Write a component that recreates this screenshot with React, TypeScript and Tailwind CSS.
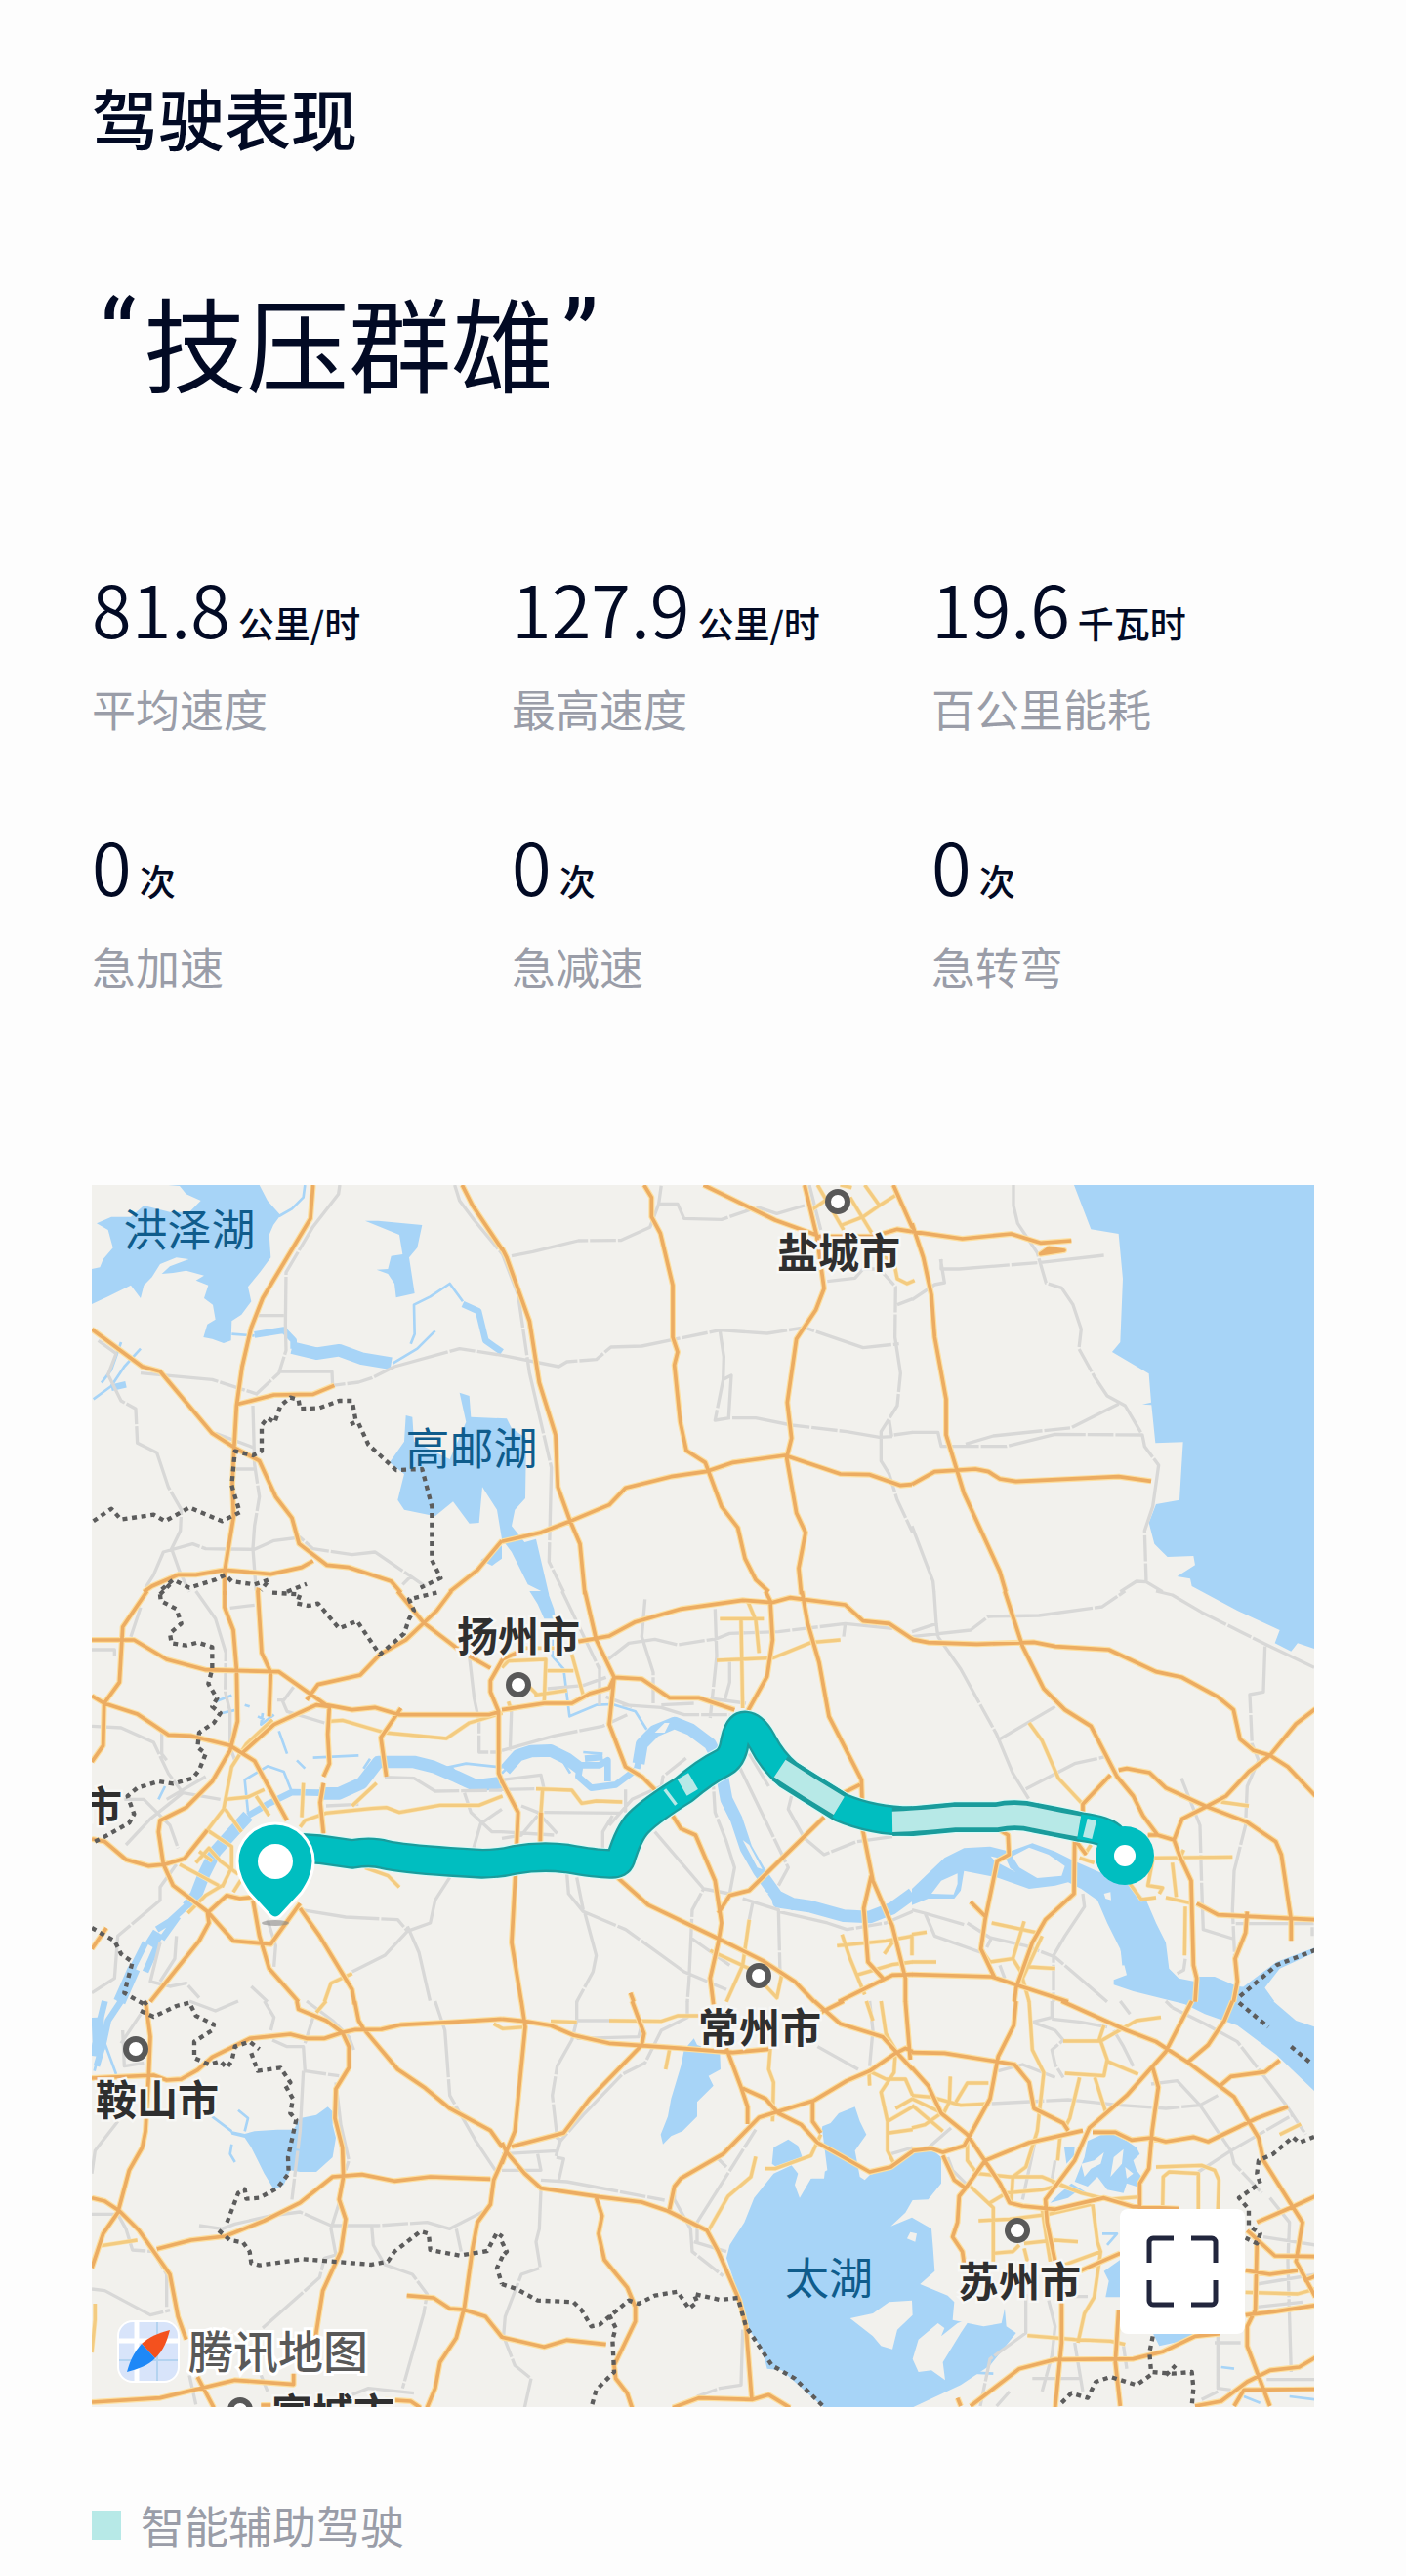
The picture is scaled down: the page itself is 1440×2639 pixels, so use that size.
import React from 'react';

type Stat = { value: string; unit: string; label: string };

const STATS: Stat[] = [
  { value: '81.8', unit: '公里/时', label: '平均速度' },
  { value: '127.9', unit: '公里/时', label: '最高速度' },
  { value: '19.6', unit: '千瓦时', label: '百公里能耗' },
  { value: '0', unit: '次', label: '急加速' },
  { value: '0', unit: '次', label: '急减速' },
  { value: '0', unit: '次', label: '急转弯' },
];

// One sheet of the base map. Path data is in sheet units, three to a map unit.
type Sheet = {
  x: number;
  y: number;
  water?: string;
  land?: string;
  stream?: string;
  river?: string;
  wideRiver?: string;
  gray: string;
  minor?: string;
  major: string;
  border?: string;
};

const SHEETS: Sheet[] = [
  {
    x: 0,
    y: -12,
    water:
      'M235 12 515 12 540 60 580 105 558 135 545 165 550 235 518 278 480 325 490 370 460 410 430 430 428 490 405 498 370 485 343 480 355 440 380 425 372 380 345 360 358 320 320 305 345 290 290 275 250 282 215 285 240 262 298 240 260 235 210 255 185 295 160 320 150 360 120 320 50 355 0 378 0 270 25 265 35 240 65 205 50 150 15 130 60 110 120 110 160 75 240 95 300 95 335 60 290 40 270 15Z M840 122 880 122 1015 135 1000 205 975 235 992 345 935 358 930 315 910 285 875 272 910 270 920 230 955 225 945 165Z M965 720 985 725 990 800 1100 855 1150 740 1130 650 1160 660 1165 725 1275 730 1290 760 1335 790 1332 975 1300 1010 1290 1060 1330 1110 1365 1100 1405 1272 1340 1240 1290 1140 1260 1100 1245 1010 1200 940 1190 1050 1160 1052 1110 985 1055 1030 960 1010 940 980 960 900 915 865 960 800Z M1195 1165 1260 1120 1260 1160 1230 1182Z',
    stream:
      'M575 108 615 85 650 50 655 12 M925 560 1000 515 1055 460 M430 470 500 475 M980 500 992 470 990 380 1040 355 1100 315 1140 370 M5 670 60 630 100 570 150 515 M30 620 60 580 90 495',
    river: 'M500 472 590 458 620 490 620 515 M1140 378 1188 400 1210 490 1260 525 M60 635 105 625',
    wideRiver: 'M615 512 690 530 760 520 830 545 920 560',
    gray:
      'M762 12 758 40 680 140 597 280 595 440 597 520 575 590 505 655 M505 413 590 413 M580 585 738 585 740 628 820 618 860 605 930 570 1130 515 1260 535 M150 590 370 610 510 655 M20 490 75 530 50 595 90 675 135 700 140 805 200 835 235 940 275 1010 272 1075 245 1130 270 1200 300 1262 M165 1250 190 1210 220 1140 310 1115 350 1130 500 1132 560 1105 640 1095 680 1130 800 1148 870 1140 980 1215 1030 1250 M980 1215 955 1240 M495 690 500 870 515 970 500 1060 495 1130 505 1260 M440 885 500 885 M380 775 500 820 M1115 12 1130 60 1175 120 1262 225',
    major:
      'M680 12 672 115 525 360 490 450 462 570 445 690 438 810 432 930 436 1030 408 1200 408 1272 M450 685 560 657 680 655 745 628 M0 455 155 570 210 585 370 775 440 820 515 860 565 970 615 1035 637 1115 722 1180 790 1187 920 1230 950 1265 M160 1262 185 1245 265 1210 320 1210 408 1195 550 1208 645 1187 680 1167 M1100 1262 1185 1195 1260 1105 M1138 12 1170 75 1262 212 M510 1262 512 1250',
    border:
      'M5 1045 60 1007 90 1040 190 1025 225 1045 300 1003 400 1045 455 1018 430 935 440 830 495 843 522 830 522 750 540 728 562 742 580 690 610 665 635 672 640 700 700 697 760 675 800 675 812 740 795 748 M820 745 850 810 935 888 1015 885 1045 1000 1045 1165 1072 1220 1010 1250 M215 1255 250 1225 300 1250 380 1225 410 1210 430 1230 500 1240 545 1225 520 1258 M600 1262 660 1238 M210 1270 240 1240',
  },
  {
    x: 1260,
    y: -12,
    gray:
      'M30 230 95 217 235 183 365 182 455 142 482 70 490 12 M485 70 540 70 560 115 675 118 785 80 845 100 930 75 M0 535 175 570 200 555 290 548 335 510 430 507 670 458 815 468 930 450 1110 512 1220 500 M670 460 682 540 680 610 655 735 700 728 780 728 890 750 1060 770 1160 787 1200 785 M680 610 705 597 697 725 M1000 308 1085 298 1110 270 1160 270 1210 325 1208 480 1225 590 1215 690 1165 770 1165 860 1190 900 1215 980 1262 1080 M1190 735 1198 785 M1215 380 1262 362 M1205 780 1262 772 M0 220 50 350 85 590 152 880 145 1170 190 1262 M945 12 980 150',
    minor:
      'M970 12 1050 150 M1115 12 1160 75 1215 40 M1070 50 1140 165 M1045 135 1110 110 1160 75 M950 90 1000 55 M1170 230 1205 250 1215 300 1245 315 1268 305 M1040 12 1075 20',
    major:
      'M0 205 15 235 85 430 115 620 165 780 172 940 210 1045 240 1115 255 1270 M0 1108 120 1080 210 1045 330 995 380 943 520 908 630 892 710 865 870 843 1040 900 1130 902 1225 935 1260 932 M437 12 460 50 460 110 487 160 525 320 525 480 540 525 530 565 548 740 567 828 625 865 675 1000 725 1065 747 1160 780 1225 820 1262 M620 12 840 120 965 165 M930 12 968 170 990 330 965 395 905 485 877 680 890 790 875 850 905 1020 933 1080 912 1190 920 1270 M965 170 1140 170 1215 148 1260 155 M1203 12 1262 145',
  },
  {
    x: 2520,
    y: -12,
    water:
      'M498 12 550 148 635 162 648 300 640 495 615 525 728 592 735 680 708 686 736 688 748 805 833 802 822 980 750 993 728 1050 745 1115 785 1155 865 1152 870 1180 815 1215 855 1222 860 1245 1000 1320 1130 1380 1115 1420 1165 1445 1185 1420 1250 1442 1250 12Z',
    gray:
      'M312 12 312 75 325 130 385 220 412 313 460 328 495 380 520 455 513 515 560 600 600 660 655 690 708 780 715 815 758 873 740 1000 715 1075 720 1232 M90 240 90 270 145 270 395 250 590 228 M0 365 70 318 100 312 88 240 M165 808 250 783 490 758 635 685 M0 772 80 772 90 815 290 815 440 778 708 780 M640 1262 690 1230 720 1232 770 1262 M0 1060 40 1165 65 1230 68 1262',
    major:
      'M0 130 35 235 60 350 70 480 105 670 105 780 160 960 270 1200 288 1262 M0 155 155 177 305 162 395 190 490 183 M0 932 70 893 195 885 235 893 270 915 320 923 635 908 735 922 M395 224 420 206 468 213 395 224 420 215 450 213',
  },
  {
    x: 0,
    y: 1248,
    stream:
      'M480 680 470 580 540 538 590 555 615 618 M1080 545 1150 530 1262 542 M380 340 430 320 M470 350 485 355 M510 385 530 395 M575 430 600 500 M205 640 225 600 M630 520 655 545 M680 512 820 505 M835 545 855 515 M445 365 400 375 M525 375 520 410 560 380',
    river:
      'M700 620 615 618 540 655 480 690 M300 960 240 1015 200 1040 M165 1080 130 1150 85 1262 M205 1080 165 1170 M265 1000 215 1070 M1100 545 1140 590',
    wideRiver:
      'M480 690 430 745 380 800 345 870 320 935 295 970 M205 1050 180 1090 M130 1160 85 1262 M1262 588 1180 598 1120 570 1050 540 990 525 880 525 830 590 760 622 700 622 ',
    gray:
      'M320 0 380 85 412 190 410 310 425 370 425 480 440 520 M425 52 500 43 M150 50 120 140 M0 180 70 180 70 200 M0 415 90 420 190 465 235 560 280 620 395 640 M215 430 215 500 230 520 M570 335 590 335 620 295 M585 335 600 370 715 405 M1160 200 1175 330 1190 400 1190 495 1260 495 M900 572 990 575 1055 615 1260 612 M1145 620 1165 680 1230 740 1262 740 M1260 670 1195 715 1170 800 M645 980 780 1002 940 1010 970 1045 900 1120 800 1170 M970 1045 1040 1020 1055 950 1100 880 M970 1030 1005 1110 1040 1262 M260 840 210 910 210 950 80 1060 70 1190 0 1235 M540 1010 565 1090 560 1155 M350 570 230 640 M100 640 160 640 240 720 265 790 M105 780 180 700 280 620 M210 1080 180 1200 240 1215 290 1205 330 1250 M260 1060 255 1130 210 1200 M490 1215 540 1262 M720 660 820 655',
    minor:
      'M355 735 405 670 430 540 475 470 555 395 M730 400 770 397 900 435 1090 453 1160 405 1262 375 M410 640 480 633 530 610 M505 630 545 690 M650 590 645 695 M640 725 655 705 720 682 860 668 905 665 945 680 1070 658 1190 658 1262 630 M875 590 800 660 M355 735 430 785 430 850 400 910 M270 840 390 905 M320 835 360 790 395 830 450 870 M435 925 470 870 M410 670 460 740 M295 990 350 935 400 905 M840 850 910 875 945 910 M715 1262 735 1205 800 1175 M330 800 370 830',
    major:
      'M170 0 95 110 85 280 38 345 35 475 0 525 M0 150 130 150 230 210 350 242 575 248 720 350 800 365 870 358 945 380 1220 380 1250 372 M0 322 38 345 140 378 235 442 305 445 425 475 500 522 600 705 M408 0 408 50 435 120 445 240 448 400 425 490 370 585 290 665 210 705 205 740 220 840 250 905 355 985 435 1075 550 1085 640 960 M640 975 700 1060 800 1225 808 1270 M510 0 522 190 550 250 545 385 M465 495 560 410 690 350 730 355 725 440 730 530 712 570 M712 590 702 650 712 745 M660 335 695 287 825 258 885 195 965 150 1060 60 1105 0 M940 0 1020 98 1125 178 M1160 200 1225 237 M950 360 888 450 905 570 M0 762 40 770 105 825 175 845 225 840 285 822 355 735 M355 985 360 1020 330 1075 180 1262 M360 985 415 935 455 945 500 940 M495 950 515 1060 545 1160 635 1262 M45 1035 0 1100 M1262 210 1225 275 1225 310 1250 370 1250 560 1262 590',
    border:
      'M210 10 212 30 260 55 275 100 240 130 245 160 290 167 325 158 370 172 370 240 358 285 385 330 370 355 395 375 375 405 330 435 325 480 350 500 330 550 310 575 250 592 205 585 140 605 110 630 130 685 115 712 45 752 0 775 M555 5 640 10 630 38 665 45 695 38 760 115 815 92 885 195 960 130 975 85 990 60 975 25 1060 5 M0 1035 70 1075 90 1115 125 1140 100 1235 170 1275',
  },
  {
    x: 1260,
    y: 1248,
    water: 'M85 0 110 40 130 85 165 85 160 55 140 0Z',
    land: 'M470 435 500 405 515 405 500 435Z M740 765 760 780 800 855 785 850Z M775 900 820 930 800 935Z',
    stream:
      'M155 90 155 200 190 240 208 385 290 350 340 348 410 370 445 425 M0 560 30 530 M250 495 310 500 M540 410 600 440 M180 510 210 560',
    river:
      'M200 510 240 540 235 570 275 605 350 595 410 550 M240 535 300 535 325 520 325 585 M255 515 310 510 M415 545 430 480',
    wideRiver:
      'M10 550 50 505 90 492 150 490 200 515 240 545 M420 530 430 470 470 430 530 405 580 425 640 470 670 530 690 640 720 700 750 790 790 860 850 945 M845 930 850 955 950 970 1050 998 1130 1002 1200 975 1262 930 M850 940 900 965',
    gray:
      'M440 25 430 140 465 250 465 350 M320 215 390 160 470 148 540 165 650 148 M655 55 660 200 640 390 M650 150 700 130 850 125 1055 100 1200 115 M1055 100 1050 140 M700 215 700 280 685 335 M300 350 300 230 M370 350 490 358 560 380 700 380 M30 350 25 490 M0 490 160 445 310 415 385 380 M0 580 120 565 130 610 M0 610 100 608 M130 680 360 682 M60 660 110 680 170 745 M340 690 310 740 310 790 M380 610 380 680 M330 720 400 640 490 600 495 570 570 510 M470 740 620 915 585 980 575 1200 570 1262 M620 915 700 930 M700 930 715 850 690 770 655 680 650 600 M730 540 880 850 850 905 M760 500 820 600 M890 630 880 670 930 760 990 810 1090 770 1200 755 M200 870 205 930 250 985 380 1040 450 1090 560 1170 690 1225 M255 990 290 1120 280 1170 230 1262 M740 945 850 980 855 1180 M850 985 1000 1020 1060 1040 1180 1020 1262 985 M185 0 300 240 M580 1065 700 1150 M770 960 760 1010 M0 740 160 750 M230 880 250 980 M140 300 250 290 320 265 M640 330 750 345 M490 350 590 345 M320 325 400 355 M0 760 60 750 110 690',
    minor:
      'M670 85 805 85 M735 90 740 360 M755 30 780 90 790 190 M660 213 835 205 950 158 1040 150 M0 235 20 215 135 210 130 340 M140 245 220 245 M215 195 250 320 M100 320 200 305 M105 608 215 612 245 652 290 645 370 648 M125 610 120 680 M760 1010 740 1150 690 1262 M640 1105 760 1160 845 1250 860 1180 M1030 1090 1180 1075 1262 1060 M1045 1055 1070 1130 1115 1240 M1090 1180 1200 1148 1262 1140 M1175 1115 1200 1080 M45 175 180 175 M20 340 30 370 M80 290 110 320',
    major:
      'M255 0 290 150 345 265 330 410 380 540 430 570 480 620 550 730 595 750 655 890 675 1020 665 1080 640 1190 650 1270 M235 155 330 138 410 95 550 55 740 28 830 35 885 20 1055 42 1110 92 1190 100 1262 148 M345 265 430 270 515 328 605 328 715 365 M810 0 825 30 832 150 815 262 755 370 M922 0 940 100 975 220 1005 385 1105 580 1110 740 1140 890 1200 1030 1240 1190 1240 1262 M0 365 130 345 215 345 270 315 330 298 345 265 M0 585 50 680 40 900 30 1080 60 1262 M120 680 118 775 M355 880 450 965 665 1068 800 1135 900 1200 960 1262 M665 990 700 935 760 920 990 695 M1040 625 1100 595 M1135 875 1112 975 1125 1140 1175 1195 M1035 1262 1200 1180 1262 1178 M0 210 45 190 M395 1235 405 1262',
  },
  {
    x: 2520,
    y: 1248,
    water:
      'M0 915 100 820 160 790 240 785 300 800 370 775 440 800 500 830 590 870 670 905 720 950 750 1020 780 1080 790 1160 820 1190 870 1200 870 1185 930 1185 1000 1215 1080 1220 1110 1270 840 1270 680 1230 620 1210 620 1195 660 1180 640 1100 600 1020 570 950 520 915 480 895 440 905 360 915 260 880 160 860 150 920 130 945 50 945 0 965Z M1000 1230 1120 1140 1240 1095 1240 1110 1130 1160 1080 1225Z',
    land: 'M308 815 360 788 420 810 470 845 460 875 385 882 330 850Z M242 815 290 825 302 852 320 865 255 830Z M60 930 90 890 140 868 140 900 128 932Z M590 930 610 925 612 950 595 945Z',
    stream: 'M645 1100 650 1150 M1080 1220 1110 1262',
    gray:
      'M0 125 75 100 68 0 M75 100 80 140 M0 140 180 120 235 78 390 75 585 48 655 0 M750 0 800 12 890 65 1090 165 1236 235 M1085 170 1080 310 1038 318 1045 470 1065 520 1030 600 1025 720 990 860 985 980 992 1130 M80 140 150 240 260 440 310 560 360 640 M270 455 440 355 M350 608 500 530 590 510 M828 575 885 720 890 900 895 1040 985 1068 M840 1130 835 1165 815 1175 M995 1022 1230 1022 1230 1060 M525 930 530 970 470 1060 435 1120 435 1262 M0 980 40 990 160 1025 M40 990 70 1060 210 1110 M170 1020 240 1065 350 1090 440 1125 600 1262 M230 1095 245 1065 M270 1150 285 1190',
    minor:
      'M360 405 400 460 450 575 525 655 M950 648 1035 660 M745 820 985 817 M835 795 820 830 M740 825 725 905 770 912 760 930 M670 900 705 948 750 942 M780 942 860 960 M800 835 812 940 M840 970 838 1120 M515 820 560 835 M550 780 530 810 M0 1055 45 1048 M0 1055 0 1120 M0 1140 75 1140 M245 1020 385 1050 M345 1015 310 1130 240 1140 M310 1130 335 1170 M400 1060 340 1190 360 1262 M360 1155 440 1160 M215 1105 240 1140',
    major:
      'M285 0 340 170 405 300 470 365 550 415 630 570 680 630 710 690 755 750 M725 750 755 750 805 765 825 820 858 890 865 1150 875 1190 870 1262 M0 148 50 158 200 163 375 157 440 170 605 180 750 248 830 265 940 325 988 365 1008 455 1050 490 1100 505 1155 540 1240 630 M1240 362 1180 408 1100 505 1035 555 965 630 905 662 830 700 805 765 M635 550 660 545 730 558 780 605 905 662 1030 710 1118 770 1135 810 1165 1010 1165 1075 M610 565 525 655 525 690 M500 760 498 930 410 1010 370 1080 320 1220 315 1262 M270 735 295 750 298 810 262 830 225 1010 212 1100 255 1190 M180 955 225 1000 M0 1178 245 1185 335 1215 480 1262 M875 960 940 995 1240 1010 M1030 985 1025 1050 993 1130 1000 1200 988 1262 M505 770 535 810',
    border: 'M1240 1103 1120 1150 1000 1252',
  },
  {
    x: 0,
    y: 2508,
    water:
      'M425 398 470 408 500 400 570 395 620 395 640 360 690 350 725 325 740 340 740 380 750 420 740 480 690 525 640 525 610 520 590 565 560 580 530 530 510 490 490 450 470 420 430 410Z',
    stream:
      'M370 355 430 400 M450 335 480 360 470 400 M430 440 425 470 440 495 M40 130 75 225 M30 130 8 215',
    river: 'M90 0 50 60 35 130 15 200 M40 0 25 60',
    wideRiver: 'M15 110 45 110 M20 130 15 170 M18 50 22 150',
    gray:
      'M300 0 380 30 450 0 M530 0 560 50 550 90 M555 120 600 140 650 140 655 215 760 230 M655 130 680 50 M650 215 640 400 615 610 M660 0 740 60 790 110 805 150 M95 90 100 200 160 190 M0 530 10 460 80 370 M0 655 80 655 105 700 125 765 190 770 230 840 230 940 M0 885 40 890 180 965 240 950 M330 690 400 700 440 685 550 660 640 648 735 690 880 690 1030 680 1100 700 1225 635 M860 690 865 750 900 810 985 840 1030 900 1020 960 955 1190 M760 620 735 700 750 780 715 790 700 850 525 1005 M750 250 765 380 790 490 780 520 M1055 0 1085 90 1100 290 1180 430 1240 520 M1120 700 1135 770 M300 1150 320 1240 M520 1150 540 1200 M800 1210 850 1190 990 1205 M150 40 90 130',
    minor: 'M30 752 140 735 M10 930 10 980 0 1080 M690 35 720 0 M1235 70 1262 85',
    major:
      'M165 0 180 110 175 230 165 400 155 450 115 520 80 650 35 715 0 820 M0 237 190 228 230 243 275 240 325 212 370 172 485 115 610 102 660 115 715 115 770 97 810 88 890 87 950 73 1100 65 1260 55 M630 0 635 25 720 60 770 97 790 140 790 205 750 270 747 360 770 450 773 540 760 610 780 670 765 770 710 890 688 1030 M808 0 820 60 835 85 940 210 1025 268 1100 330 1225 398 1262 450 M0 605 40 615 85 645 145 705 240 840 265 970 290 1040 M325 1155 375 1250 M200 762 305 735 410 723 530 675 640 620 740 540 830 533 930 553 1040 540 1225 547 M0 1233 210 1220 440 1165 620 1178 620 1145 M968 905 1050 912 1100 945 1142 948 1210 970 1262 1035 M1275 460 1235 550 1225 625 1185 680 1170 760 1145 940 1120 1035 1070 1110 1055 1190 1030 1250 M900 1225 980 1230 1010 1250 M520 1242 550 1242',
    border:
      'M150 30 190 48 260 15 300 5 320 45 375 72 370 90 315 125 315 175 360 195 395 185 415 205 430 185 440 140 485 125 515 148 M490 160 510 215 580 205 610 250 595 260 618 300 610 345 628 365 603 480 605 530 570 575 515 605 475 608 470 578 450 590 412 690 M390 705 425 735 465 742 485 770 490 805 515 812 650 793 860 810 910 800 930 770 1010 708 1035 715 1040 765 1130 782 1215 768 1245 712 1262 725 M1262 785 1245 820 1260 870 M160 0 175 20',
  },
  {
    x: 1260,
    y: 2508,
    water:
      'M835 530 775 605 745 680 700 750 690 790 720 880 740 940 760 1010 800 1070 815 1130 860 1135 990 1250 1260 1250 1410 1180 1500 1120 1580 1020 1550 1000 1545 945 1535 990 1480 1000 1385 980 1390 925 1370 905 1285 870 1330 830 1325 760 1320 700 1260 665 1195 692 1240 650 1262 612 1310 610 1350 560 1350 480 1320 455 1260 460 1200 510 1130 535 1115 550 1100 540 1085 460 1120 410 1100 370 1085 325 1035 345 1010 375 985 385 975 430 995 500 990 545 950 545 915 605 900 565 910 530 890 505Z M830 500 835 450 880 425 910 445 925 485 850 515Z M590 115 600 135 670 160 672 210 635 230 650 260 600 310 600 355 555 400 520 415 495 440 488 410 510 355 520 300 550 200 560 150Z',
    land: 'M1070 975 1140 960 1190 925 1260 920 1262 965 1215 1010 1200 1070 1165 1060 1140 1030Z M1262 1100 1280 1040 1340 990 1360 1005 1350 1030 1400 990 1440 975 1410 1020 1355 1110 1362 1165 1320 1135 1280 1140Z M1255 710 1275 715 1270 740 1245 730Z M925 510 985 400 1000 520 950 545Z',
    gray:
      'M230 0 230 60 215 120 170 200 155 290 170 420 185 430 M0 470 170 460 180 420 M230 60 330 60 M230 115 420 110 430 70 M570 0 570 50 490 90 440 190 370 225 250 350 180 430 165 480 190 485 175 550 M0 520 120 520 110 470 M120 550 200 555 280 570 500 612 M120 580 115 700 105 740 118 820 60 840 10 970 5 1030 40 1120 90 1160 70 1250 M530 560 530 610 580 700 585 770 680 845 M600 740 600 680 780 395 M590 740 690 770 M970 140 1095 210 M740 1010 735 1180 670 1190 600 1215 M1130 0 1140 90 1130 200 M1195 470 1262 450 M660 480 690 510',
    minor:
      'M0 85 70 80 M150 62 230 65 M330 60 490 62 540 45 620 45 M515 150 503 210 M780 478 765 540 695 600 635 705 M808 515 840 515 950 475 980 410 M825 145 820 210 835 250 832 370 M1130 260 1128 215 1180 240 1240 240 1262 290 M1120 0 1140 60 M1165 0 1180 100 1210 150 1205 220 1165 280 1185 370 1185 460 1205 500 M1185 370 1262 325 M1210 330 1262 300 M1190 405 1262 395',
    major:
      'M0 55 70 62 150 75 220 105 330 130 550 145 710 158 820 148 M60 0 72 80 40 400 15 460 0 500 M0 435 15 465 70 530 120 575 300 602 430 618 510 645 630 705 665 770 730 920 750 1000 768 1225 M400 0 437 100 430 135 270 300 190 405 30 447 M290 605 308 660 297 715 315 795 385 880 410 940 410 985 345 1120 350 1160 385 1205 400 1250 M515 640 530 570 550 545 680 470 790 358 960 305 1060 245 1130 215 1210 160 1240 145 1262 155 M690 145 735 265 755 325 755 378 M740 268 810 300 850 345 920 380 970 435 1130 525 1195 510 1262 462 M960 0 1040 70 1170 110 1215 160 1262 210 M955 310 955 370 980 405 M980 35 1050 0 M0 1033 130 1063 200 1042 320 1055 M525 1250 605 1220 770 1225 820 1210 885 1250 M1240 0 1255 180',
    border:
      'M0 740 15 770 0 785 M0 870 45 885 110 920 220 925 245 950 275 1000 300 995 390 920 420 930 470 905 540 893 575 945 600 925 590 900 670 918 725 912 750 1000 830 1120 900 1160 990 1248 M330 965 350 1005 340 1040 345 1140 290 1195 275 1248',
  },
  {
    x: 2520,
    y: 2508,
    water:
      'M820 0 900 40 1000 75 1120 165 1240 280 1240 80 1180 60 1110 0Z M468 450 500 447 498 475 475 500Z M540 430 580 412 620 410 660 430 690 450 700 470 680 490 690 520 710 545 690 570 660 560 650 590 600 580 570 540 540 570 500 555 530 480Z M490 560 450 595 425 620 480 605 500 590 540 590Z M590 830 640 795 640 910 595 910 605 860Z M740 1020 870 1020 850 1040 760 1060Z',
    land: 'M520 500 560 490 590 465 580 500 550 515 530 540 M620 480 650 455 645 500 610 540Z M655 510 680 530 660 545Z',
    stream: 'M585 715 630 715 600 750 M950 1125 990 1130 M1020 1215 1070 1235 M1160 1215 1240 1225 M190 1142 250 1145',
    gray:
      'M430 0 430 50 370 65 440 90 465 120 430 150 440 195 465 235 M430 55 520 65 600 80 M620 90 650 140 680 200 M735 255 815 245 885 320 780 330 640 320 480 303 245 315 M265 215 340 195 440 235 M885 320 940 290 M885 320 980 460 990 500 1075 590 M880 525 980 460 1170 350 M800 20 900 70 1000 125 1150 320 1210 410 M640 0 670 40 M780 0 800 20 M385 400 340 610 M110 480 125 520 165 560 M440 490 430 550 M40 460 120 390 M350 900 350 1020 240 1100 210 1245 M420 920 440 1000 430 1090 400 1200 M500 1050 525 1200 M370 1160 520 1160 M650 1060 660 1130 M260 1245 300 1200 M1100 605 1160 680 1155 800 1165 1140 M1060 870 1240 840 M1060 940 1200 925 M940 1030 940 1190 980 1195 M1090 1163 1240 1163 M1080 725 1240 750 M930 1050 1010 1050 M890 1225 940 1200 M540 908 470 908',
    minor:
      'M360 0 370 150 405 220 385 400 350 510 310 540 305 620 M465 123 580 123 600 180 590 230 470 222 M580 123 690 60 765 50 M575 120 590 75 M600 185 695 225 M515 235 485 360 470 390 M562 235 595 340 M0 290 60 295 150 320 240 315 M118 232 115 310 95 350 M235 252 170 252 135 310 M0 320 95 400 M0 390 40 380 90 345 M170 420 170 490 200 530 300 540 400 540 520 590 600 610 M180 570 250 635 250 800 M240 620 290 590 400 580 440 570 M205 675 300 670 420 655 550 625 M555 625 570 740 580 770 470 810 M345 745 440 735 510 740 M250 775 310 770 330 750 M400 640 415 740 425 800 M580 770 560 910 530 960 510 1050 M355 1028 500 1040 610 1045 655 1055 M455 420 448 490 M750 510 890 505 930 520 943 550 940 640 M770 640 772 540 790 525 880 530 880 640 M1130 410 1195 378 M1025 895 1185 900 1240 885 M345 760 355 800 M430 555 520 590 M600 610 700 602 M0 300 95 345',
    major:
      'M320 0 313 75 265 170 240 300 160 445 95 465 60 453 0 460 M0 158 100 160 255 185 315 195 360 250 375 330 465 375 480 398 M0 205 50 260 90 345 170 410 270 560 300 620 340 630 440 640 590 605 680 632 820 638 M95 475 130 550 165 575 145 600 140 680 125 725 155 770 160 805 M165 575 225 490 360 435 525 398 M460 0 660 90 750 125 850 190 990 295 1065 420 1080 490 1200 680 1180 800 1240 910 M860 0 780 155 740 200 660 290 545 390 500 490 410 610 415 680 440 800 M740 205 757 265 738 400 728 515 700 560 700 640 M985 0 960 60 910 135 845 190 M945 262 980 232 1085 218 1130 182 M555 403 625 403 675 427 735 420 780 432 865 418 910 432 1060 360 1155 325 M460 925 460 1050 440 1250 M515 830 640 775 M180 1245 330 1130 440 1102 680 1100 770 1078 870 1030 945 1022 M635 950 625 1110 640 1245 M140 1220 150 1245 M1060 680 1175 630 1240 600 M1030 705 1115 783 1240 785 M1060 740 1055 950 1030 1000 1030 1060 1100 1245 M1025 828 1100 840 1185 828 M1025 965 1110 955 1240 935 M870 1245 950 1230 1030 1170 1100 1135 1190 1125 1240 1095 M990 1245 1020 1195 1240 1193 M1205 860 1240 845',
    border:
      'M1005 5 1095 80 M1165 140 1225 190 M1236 417 1190 435 1170 418 1110 470 1065 490 1060 530 1070 560 1005 605 1035 640 1035 690 1070 715 1060 745 1025 728 M740 1030 730 1080 735 1140 800 1145 860 1140 865 1190 860 1245 M460 1235 490 1205 540 1220 565 1170 610 1155 690 1180 740 1145 M780 1150 810 1120',
  },
];

// Driven route, and the stretches of it where assisted driving was on
const ROUTE =
  'M600 2035 700 2042 800 2056 Q860 2046 900 2058 Q950 2070 1100 2080 L1200 2086 Q1250 2086 1300 2074 Q1380 2060 1460 2070 Q1560 2088 1600 2086 Q1620 2086 1625 2072 Q1650 1990 1680 1960 Q1720 1920 1820 1858 Q1880 1805 1940 1775 Q1968 1760 1975 1715 Q1985 1660 2010 1662 Q2035 1664 2060 1710 Q2090 1770 2140 1812 Q2220 1862 2300 1912 Q2400 1955 2520 1955 L2650 1943 2780 1943 Q2840 1930 2900 1945 Q2980 1960 3040 1973 Q3110 1982 3130 2000 L3175 2061';

const ASSISTED = [
  'M2114 1793 Q2200 1850 2296 1908',
  'M2460 1957 Q2520 1956 2650 1943 L2780 1943 Q2840 1930 2900 1945 Q2970 1960 3034 1971',
  'M3052 1975 3080 1982',
  'M1814 1852 1848 1832',
  'M1774 1884 1782 1878',
];

const CITIES = [
  { name: '盐城市', x: 765, y: 69, dot: [764, 17] },
  { name: '扬州市', x: 437, y: 462, dot: [437, 512] },
  { name: '常州市', x: 684, y: 863, dot: [683, 810] },
  { name: '苏州市', x: 950, y: 1123, dot: [948, 1071] },
  { name: '鞍山市', x: 67, y: 937, dot: [45, 885] },
  { name: '宣城市', x: 247, y: 1258, dot: [152, 1255] },
  { name: '市', x: 10, y: 636, dot: null },
];

const LAKES = [
  { name: '洪泽湖', x: 100, y: 47 },
  { name: '高邮湖', x: 389, y: 271 },
  { name: '太湖', x: 755, y: 1121 },
];

const Layer = ({
  name,
  ...props
}: { name: Exclude<keyof Sheet, 'x' | 'y'> } & Omit<React.SVGProps<SVGGElement>, 'name'>) => (
  <g fill="none" strokeLinejoin="round" {...props}>
    {SHEETS.map(
      (sheet) =>
        sheet[name] && (
          <path key={`${sheet.x}-${sheet.y}`} transform={`translate(${sheet.x} ${sheet.y})`} d={sheet[name]} />
        ),
    )}
  </g>
);

const RouteMap = () => (
  <svg viewBox="0 0 1252 1252" className="block w-full" role="img" aria-label="行程地图">
    <rect width="1252" height="1252" fill="#f2f1ed" />
    <g transform="scale(0.33333)">
      <Layer name="water" fill="#a7d4f7" />
      <Layer name="stream" stroke="#a7d4f7" strokeWidth="8" />
      <Layer name="river" stroke="#a7d4f7" strokeWidth="20" />
      <Layer name="wideRiver" stroke="#a7d4f7" strokeWidth="38" />
      <Layer name="land" fill="#f2f1ed" />
      <Layer name="gray" stroke="#d8d8d7" strokeWidth="10" strokeDasharray="240 6 80 6" />
      <Layer name="minor" stroke="#fbe6b8" strokeWidth="14" />
      <Layer name="minor" stroke="#f3cb81" strokeWidth="10" />
      <Layer name="major" stroke="#fddf9f" strokeWidth="18" />
      <Layer name="major" stroke="#ecac62" strokeWidth="11" />
      <Layer name="border" stroke="#5c5c5c" strokeWidth="13" strokeDasharray="15 14" />

      <g fill="none" strokeLinejoin="round">
        <path d={ROUTE} stroke="#d6fbf8" strokeWidth="98" />
        <path d={ROUTE} stroke="#1a9c9c" strokeWidth="92" />
        <path d={ROUTE} stroke="#00bec0" strokeWidth="78" />
        {ASSISTED.map((d, i) => (
          <React.Fragment key={d}>
            {i < 2 && <path d={d} stroke="#1a9c9c" strokeWidth="88" />}
            <path d={d} stroke="#b7e9e7" strokeWidth={i < 2 ? 64 : 58} />
          </React.Fragment>
        ))}
      </g>
    </g>

    {/* End point */}
    <circle cx="1058" cy="687" r="30" fill="#00bec0" />
    <circle cx="1058" cy="687" r="11" fill="#fff" />

    {/* Start pin */}
    <ellipse cx="188" cy="756" rx="14" ry="3" fill="#8a8a88" opacity="0.6" />
    <path
      d="M188 654a39 39 0 0 1 39 39c0 13-6 23-12 32L193 749q-5 4-10 0L161 725c-6-9-12-19-12-32a39 39 0 0 1 39-39z"
      fill="#00bec0"
      stroke="#fff"
      strokeWidth="3"
    />
    <circle cx="188" cy="693" r="18" fill="#fff" />

    {CITIES.map(({ name, x, y, dot }) => (
      <g key={name}>
        {dot && <circle cx={dot[0]} cy={dot[1]} r="10" fill="#fff" stroke="#595959" strokeWidth="6" />}
        <text
          x={x}
          y={y + 16}
          textAnchor="middle"
          className="fill-[#2f2f2f] stroke-[#f7f7f5] stroke-[5px] text-[42px] font-bold [paint-order:stroke]"
        >
          {name}
        </text>
      </g>
    ))}
    {LAKES.map(({ name, x, y }) => (
      <text key={name} x={x} y={y + 16} textAnchor="middle" className="fill-[#0f5c8c] text-[45px]">
        {name}
      </text>
    ))}
  </svg>
);

const MapLogo = () => (
  <svg viewBox="0 0 66 66" className="size-[66px]" aria-hidden="true">
    <rect x="1" y="1" width="64" height="64" rx="16" fill="#fff" />
    <clipPath id="logo-tile">
      <rect x="3" y="3" width="60" height="60" rx="14" />
    </clipPath>
    <g clipPath="url(#logo-tile)">
      <rect width="66" height="66" fill="#d8e4fa" />
      <path d="M21 0V66M0 22H66" stroke="#fff" strokeWidth="5" />
      <path d="M42 0V66M0 42H66" stroke="#b4d3f0" strokeWidth="2" />
    </g>
    <path d="M55 11C52 22 49 31 40 40L26 25C34 18 43 14 55 11Z" fill="#f4511e" />
    <path d="M11 54C14 43 18 34 26 25L40 40C33 47 23 51 11 54Z" fill="#1e88f7" />
  </svg>
);

const StatItem = ({ value, unit, label }: Stat) => (
  <div className="flex flex-col">
    <dd className="flex items-baseline gap-2 text-[#020a24]">
      <span className="text-[74px] leading-[96px] font-[350]">{value}</span>
      <span className="text-[37px] font-medium">{unit}</span>
    </dd>
    <dt className="mt-6 text-[45px] leading-[64px] text-[#9a9da8]">{label}</dt>
  </div>
);

export default function App() {
  return (
    <main
      lang="zh-CN"
      className="min-h-screen bg-[#fdfdfd] px-[94px] pt-20 pb-5 font-['Noto_Sans_CJK_SC',sans-serif] text-[#020a24]"
    >
      <h2 className="text-[68px] leading-[80px] font-medium">驾驶表现</h2>
      <h1 className="mt-32 flex gap-2 pl-2 text-[105px] leading-[120px]">
        <span className="font-['Roboto',sans-serif]">“</span>
        <span>技压群雄</span>
        <span className="font-['Roboto',sans-serif]">”</span>
      </h1>

      <dl className="mt-[166px] grid grid-cols-3 gap-x-[38px] gap-y-20 whitespace-nowrap">
        {STATS.map((stat) => (
          <StatItem key={stat.label} {...stat} />
        ))}
      </dl>

      <section className="relative mt-48">
        <RouteMap />
        <div className="absolute bottom-6 left-[25px] flex items-center gap-2">
          <MapLogo />
          <svg viewBox="0 0 190 60" className="w-[190px] overflow-visible" role="img" aria-label="腾讯地图">
            <text
              x="0"
              y="47"
              className="fill-[#595959] stroke-white stroke-[6px] text-[46px] font-medium [paint-order:stroke]"
            >
              腾讯地图
            </text>
          </svg>
        </div>
        <button
          type="button"
          aria-label="全屏"
          className="absolute right-[71px] bottom-[75px] flex size-32 items-center justify-center rounded-lg bg-white"
        >
          <svg viewBox="0 0 74 74" className="size-[74px]" fill="none" stroke="#22263d" strokeWidth="5">
            <path d="M3 28V7a4 4 0 0 1 4-4H28M46 3H67a4 4 0 0 1 4 4V28M71 46V67a4 4 0 0 1-4 4H46M28 71H7a4 4 0 0 1-4-4V46" />
          </svg>
        </button>
      </section>

      <div className="mt-[91px] flex items-center gap-5">
        <span className="size-[30px] bg-[#b7e9e7]" />
        <span className="text-[45px] leading-[60px] text-[#9a9da8]">智能辅助驾驶</span>
      </div>
    </main>
  );
}
